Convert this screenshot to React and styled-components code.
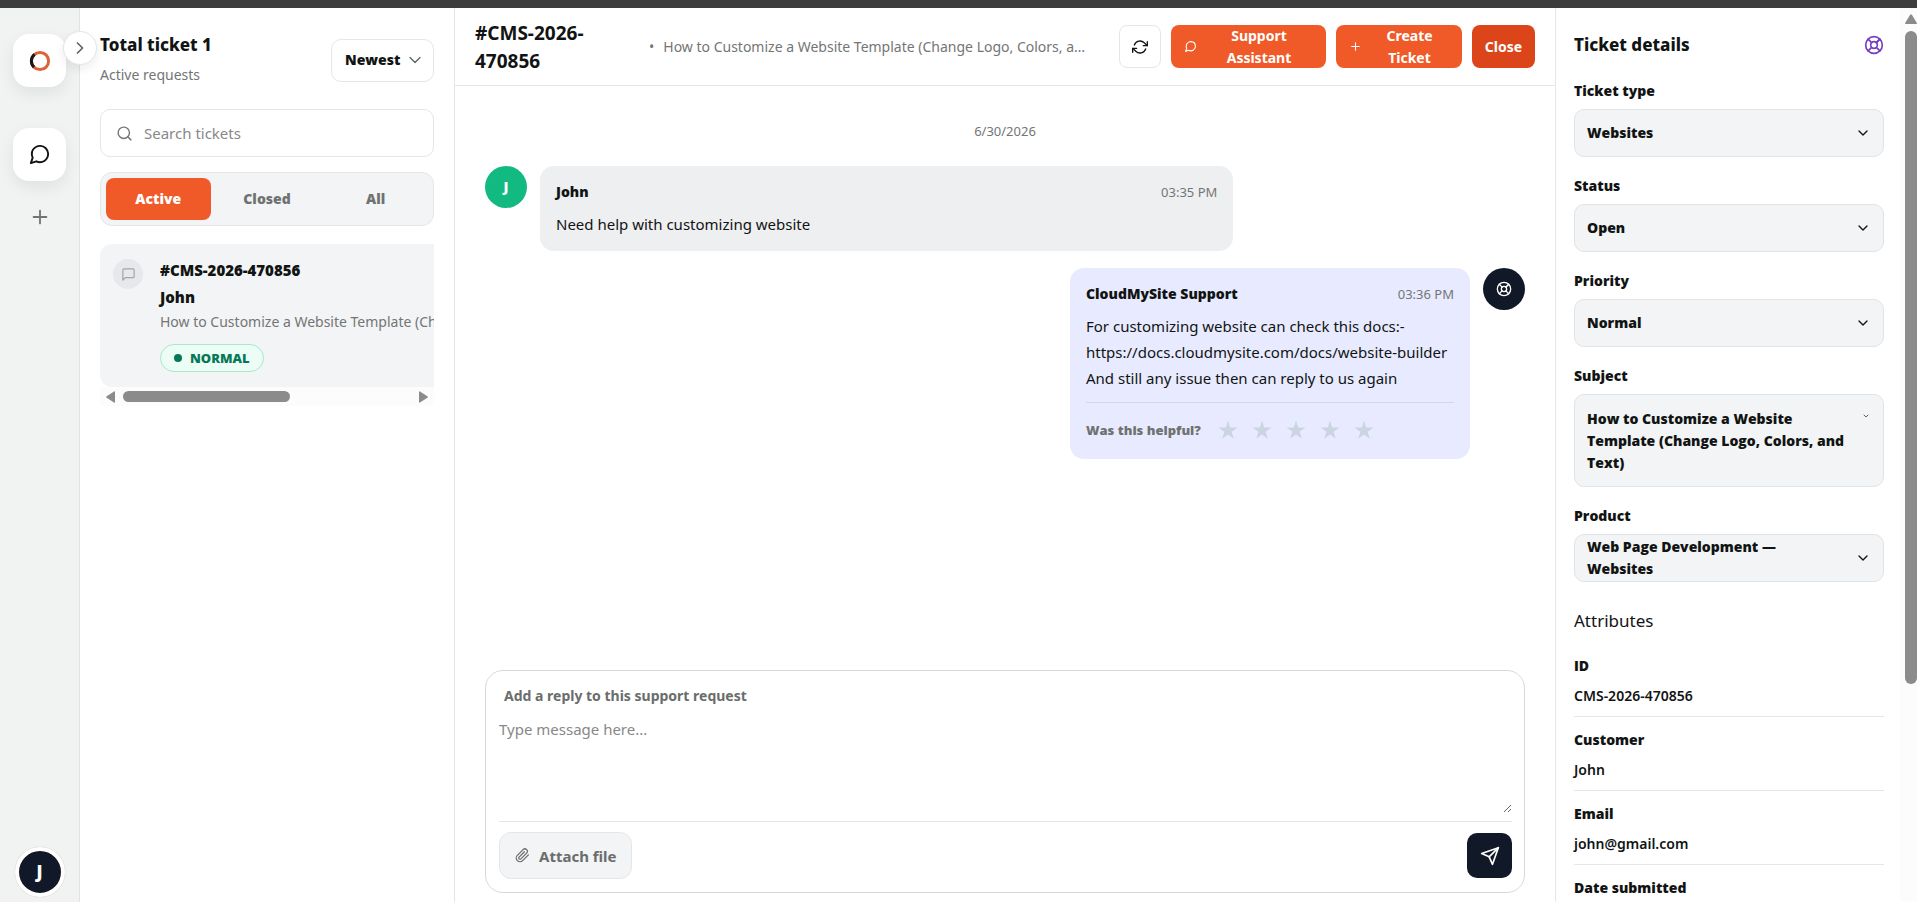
import React, { useState } from 'react';
import styled, { createGlobalStyle } from 'styled-components';
import {
    FiChevronDown,
    FiChevronRight,
    FiLifeBuoy,
    FiMessageCircle,
    FiMessageSquare,
    FiPaperclip,
    FiPlus,
    FiRefreshCw,
    FiSearch,
    FiSend,
} from 'react-icons/fi';

const heavyFont = '"Segoe UI", "Open Sans", sans-serif';

const GlobalStyle = createGlobalStyle`
    *, *::before, *::after {
        box-sizing: border-box;
    }

    body {
        margin: 0;
        background: #ffffff;
        color: #111413;
        font-family: "Segoe UI", "Noto Sans", sans-serif;
        font-size: 15px;
        line-height: 22px;
    }

    button, input, select, textarea {
        font: inherit;
        color: inherit;
    }

    button, select {
        cursor: pointer;
    }

    h1, h2, h3, p, dl, dt, dd {
        margin: 0;
    }
`;

const Page = styled.div`
    display: flex;
    flex-direction: column;
    height: 100vh;
    overflow: hidden;
    border-top: 8px solid #3d3d3d;
`;

const Workspace = styled.div`
    display: grid;
    grid-template-columns: 80px 375px minmax(0, 1fr) 361px;
    flex: 1;
    min-height: 0;
`;

/* Left rail */

const Rail = styled.nav`
    position: relative;
    display: flex;
    flex-direction: column;
    align-items: center;
    padding: 26px 0 5px;
    background: #f0f3f2;
    border-right: 1px solid #e0e3e2;
`;

const RailTile = styled.button`
    display: grid;
    place-items: center;
    width: 53px;
    height: 53px;
    padding: 0;
    border: none;
    border-radius: 16px;
    background: #ffffff;
    box-shadow: 0 6px 16px rgba(20, 30, 28, 0.08);
    margin-bottom: ${(props) => props.$gap || '0'};
`;

const RailPlain = styled.button`
    display: grid;
    place-items: center;
    width: 36px;
    height: 36px;
    padding: 0;
    border: none;
    background: none;
    color: #6f7473;
`;

const CollapseButton = styled.button`
    position: absolute;
    top: 23px;
    right: -18px;
    z-index: 2;
    display: grid;
    place-items: center;
    width: 34px;
    height: 34px;
    padding: 0;
    border: 1px solid #e3e6e5;
    border-radius: 50%;
    background: #ffffff;
    color: #5c6160;
    box-shadow: 0 4px 10px rgba(20, 30, 28, 0.08);
`;

const ProfileButton = styled.button`
    width: 50px;
    height: 50px;
    margin-top: auto;
    padding: 0;
    border: 4px solid #ffffff;
    border-radius: 50%;
    background: #111827;
    color: #ffffff;
    font-family: ${heavyFont};
    font-size: 17px;
    font-weight: 800;
    box-shadow: 0 0 1px rgba(20, 30, 28, 0.3);
`;

/* Ticket list */

const ListPanel = styled.section`
    display: flex;
    flex-direction: column;
    min-width: 0;
    padding: 26px 20px;
    border-right: 1px solid #e4e6e8;
`;

const ListHeader = styled.header`
    display: flex;
    justify-content: space-between;
    align-items: center;
    margin-bottom: 23px;
`;

const PanelTitle = styled.h2`
    font-size: 17px;
    line-height: 22px;
    font-weight: 800;
`;

const ListCaption = styled.p`
    margin-top: 8px;
    color: #737675;
    font-size: 14px;
`;

const SelectWrap = styled.div`
    position: relative;
    width: ${(props) => props.$width || '100%'};

    svg {
        position: absolute;
        top: 50%;
        right: ${(props) => props.$inset || '13px'};
        transform: translateY(-50%);
        pointer-events: none;
    }
`;

const SortSelect = styled.select`
    appearance: none;
    width: 100%;
    height: 43px;
    padding: 0 30px 0 13px;
    border: 1px solid #e4e6e8;
    border-radius: 10px;
    background: #ffffff;
    font-family: ${heavyFont};
    font-size: 14px;
    font-weight: 800;
`;

const SearchBox = styled.label`
    display: flex;
    align-items: center;
    gap: 11px;
    height: 48px;
    margin-bottom: 15px;
    padding: 0 15px;
    border: 1px solid #e4e6e8;
    border-radius: 10px;
    color: #737675;
`;

const SearchInput = styled.input`
    flex: 1;
    min-width: 0;
    padding: 0;
    border: none;
    outline: none;
    background: none;

    &::placeholder {
        color: #868988;
        opacity: 1;
    }
`;

const Tabs = styled.div`
    display: grid;
    grid-template-columns: repeat(3, 1fr);
    gap: 4px;
    height: 54px;
    margin-bottom: 18px;
    padding: 5px;
    border: 1px solid #e4e6e8;
    border-radius: 12px;
    background: #f2f4f5;
`;

const Tab = styled.button`
    padding: 0;
    border: none;
    border-radius: 8px;
    background: ${(props) => (props.$active ? '#f05a28' : 'transparent')};
    color: ${(props) => (props.$active ? '#ffffff' : '#6f7271')};
    font-family: ${heavyFont};
    font-size: 14px;
    font-weight: 800;
`;

const ListScroller = styled.div`
    overflow: hidden;
`;

const TicketCard = styled.article`
    display: flex;
    gap: 17px;
    width: 640px;
    height: 143px;
    padding: 15px 13px;
    border-radius: 12px;
    background: #f2f4f5;
`;

const TicketIcon = styled.span`
    display: grid;
    place-items: center;
    flex: none;
    width: 30px;
    height: 30px;
    border-radius: 50%;
    background: #e6e8eb;
    color: #a3a6a8;
`;

const TicketBody = styled.div`
    display: flex;
    flex-direction: column;
    align-items: flex-start;
    white-space: nowrap;
`;

const TicketName = styled.strong`
    margin-bottom: ${(props) => props.$gap || '3px'};
    font-family: ${heavyFont};
    font-size: 15px;
    font-weight: 800;
`;

const TicketSubject = styled.span`
    margin-bottom: 11px;
    color: #737675;
    font-size: 14px;
`;

const PriorityBadge = styled.span`
    display: flex;
    align-items: center;
    gap: 8px;
    height: 28px;
    padding: 0 13px;
    border: 1px solid #a9e8cb;
    border-radius: 14px;
    background: #ecfdf5;
    color: #067857;
    font-family: ${heavyFont};
    font-size: 13px;
    font-weight: 800;

    &::before {
        content: "";
        width: 8px;
        height: 8px;
        border-radius: 50%;
        background: #067857;
    }
`;

const HorizontalBar = styled.div`
    display: flex;
    align-items: center;
    gap: 8px;
    height: 19px;
    padding: 0 6px;
    background: #fcfcfc;
`;

const HorizontalThumb = styled.span`
    width: 167px;
    height: 11px;
    margin-right: auto;
    border-radius: 6px;
    background: #8b8b8b;
`;

const Arrow = styled.svg`
    display: block;
    flex: none;
    fill: #8b8b8b;
`;

/* Conversation */

const Conversation = styled.main`
    display: flex;
    flex-direction: column;
    min-width: 0;
    border-right: 1px solid #e4e6e8;
`;

const TopBar = styled.header`
    display: flex;
    align-items: center;
    height: 78px;
    padding: 0 20px;
    border-bottom: 1px solid #e4e6e8;
`;

const TopTitle = styled.h1`
    flex: none;
    width: 164px;
    padding-right: 40px;
    font-size: 19px;
    line-height: 28px;
    font-weight: 700;
`;

const TopSubject = styled.p`
    flex: 1;
    min-width: 0;
    margin-right: 28px;
    padding-left: 10px;
    overflow: hidden;
    color: #737675;
    font-size: 14px;
    white-space: nowrap;
    text-overflow: ellipsis;

    &::before {
        content: "•";
        margin-right: 9px;
    }
`;

const Actions = styled.div`
    display: flex;
    gap: 10px;
`;

const IconButton = styled.button`
    display: grid;
    place-items: center;
    width: 42px;
    height: 43px;
    padding: 0;
    border: 1px solid #e4e6e8;
    border-radius: 8px;
    background: #ffffff;
`;

const ActionButton = styled.button`
    display: flex;
    align-items: center;
    gap: 8px;
    width: ${(props) => props.$width};
    height: 43px;
    padding: ${(props) => (props.$strong ? '0' : '0 13px')};
    border: none;
    border-radius: 8px;
    background: ${(props) => (props.$strong ? '#dc4519' : '#f05a28')};
    color: #ffffff;
    font-size: 14px;
    font-weight: 700;

    span {
        flex: 1;
    }

    svg {
        flex: none;
    }
`;

const Thread = styled.div`
    flex: 1;
    min-height: 0;
    padding: 34px 30px 0;
    overflow: hidden;
`;

const DayLabel = styled.p`
    margin-bottom: 24px;
    color: #737675;
    font-size: 13px;
    text-align: center;
`;

const MessageRow = styled.div`
    display: flex;
    justify-content: ${(props) => (props.$own ? 'flex-end' : 'flex-start')};
    gap: 13px;
    margin-bottom: 17px;
`;

const Avatar = styled.span`
    display: grid;
    place-items: center;
    flex: none;
    width: 42px;
    height: 42px;
    border-radius: 50%;
    background: ${(props) => props.$color};
    color: #ffffff;
    font-family: ${heavyFont};
    font-size: 14px;
    font-weight: 800;
`;

const Bubble = styled.article`
    width: ${(props) => props.$width};
    padding: 15px 16px 14px;
    border-radius: 14px;
    background: ${(props) => props.$color};
`;

const BubbleHead = styled.header`
    display: flex;
    justify-content: space-between;
    margin-bottom: 8px;
`;

const Sender = styled.strong`
    font-family: ${heavyFont};
    font-size: 14px;
    font-weight: 800;
`;

const Time = styled.time`
    color: #737675;
    font-size: 13px;
`;

const MessageText = styled.p`
    font-size: 15px;
    line-height: 26px;
    white-space: pre-line;
`;

const Feedback = styled.div`
    display: flex;
    align-items: center;
    gap: 16px;
    height: 43px;
    margin-top: 11px;
    padding-top: 12px;
    border-top: 1px solid #cfd8ea;
    color: #6f7271;
    font-family: ${heavyFont};
    font-size: 13px;
    font-weight: 800;
`;

const Stars = styled.div`
    display: flex;
    gap: 12px;
`;

const Star = styled.button`
    display: block;
    width: 22px;
    height: 22px;
    padding: 0;
    border: none;
    background: none;

    svg {
        display: block;
        fill: #cbd5e1;
    }
`;

const Composer = styled.form`
    margin: 0 30px 9px;
    padding: 14px 12px 13px 13px;
    border: 1px solid #d6d9db;
    border-radius: 18px;
`;

const ComposerLabel = styled.label`
    display: block;
    padding: 0 5px;
    color: #6a6d6c;
    font-size: 14px;
    font-weight: 700;
`;

const ComposerInput = styled.textarea`
    display: block;
    width: 100%;
    height: 95px;
    margin: 11px 0 8px;
    padding: 0;
    border: none;
    outline: none;
    resize: vertical;

    &::placeholder {
        color: #868988;
        opacity: 1;
    }
`;

const ComposerFooter = styled.div`
    display: flex;
    justify-content: space-between;
    align-items: center;
    padding-top: 10px;
    border-top: 1px solid #e4e6e8;
`;

const AttachButton = styled.button`
    display: flex;
    align-items: center;
    gap: 9px;
    height: 47px;
    padding: 0 15px;
    border: 1px solid #e4e6e8;
    border-radius: 12px;
    background: #f2f4f5;
    color: #6a6d6c;
    font-size: 15px;
    font-weight: 700;
`;

const SendButton = styled.button`
    display: grid;
    place-items: center;
    width: 45px;
    height: 45px;
    padding: 0;
    border: none;
    border-radius: 10px;
    background: #111827;
    color: #ffffff;
`;

/* Ticket details */

const DetailsPanel = styled.aside`
    display: flex;
    min-width: 0;
    min-height: 0;
`;

const DetailsBody = styled.div`
    flex: 1;
    min-width: 0;
    padding: 26px 16px 0 18px;
    overflow: hidden;
`;

const DetailsHeader = styled.header`
    display: flex;
    justify-content: space-between;
    align-items: center;
    margin-bottom: 24px;

    svg {
        color: #7440c0;
    }
`;

const Field = styled.div`
    margin-bottom: 18px;
`;

const FieldLabel = styled.label`
    display: block;
    margin-bottom: 7px;
    font-family: ${heavyFont};
    font-size: 14px;
    font-weight: 800;
`;

const FieldSelect = styled.select`
    appearance: none;
    display: block;
    width: 100%;
    height: 48px;
    padding: 0 32px 0 12px;
    border: 1px solid #e1e4e6;
    border-radius: 10px;
    background: #f2f4f5;
    font-family: ${heavyFont};
    font-size: 14px;
    font-weight: 800;
    opacity: 1;
`;

const WrapField = styled.div`
    position: relative;
    display: flex;
    align-items: ${(props) => (props.$tall ? 'flex-start' : 'center')};
    justify-content: space-between;
    height: ${(props) => (props.$tall ? '93px' : '48px')};
    padding: ${(props) => (props.$tall ? '13px 13px 13px 12px' : '0 12px')};
    border: 1px solid #e1e4e6;
    border-radius: 10px;
    background: #f2f4f5;
    font-family: ${heavyFont};
    font-size: 14px;
    font-weight: 800;

    span {
        padding-right: ${(props) => (props.$tall ? '8px' : '24px')};
    }

    svg {
        flex: none;
        margin-top: ${(props) => (props.$tall ? '4px' : '0')};
    }
`;

const OverlaySelect = styled.select`
    position: absolute;
    inset: 0;
    width: 100%;
    height: 100%;
    opacity: 0;
`;

const SectionTitle = styled.h3`
    margin: 28px 0 23px;
    font-size: 17px;
    line-height: 22px;
    font-weight: 400;
`;

const Attributes = styled.dl`
    display: flex;
    flex-direction: column;
    gap: 12px;
`;

const Attribute = styled.div`
    height: 62px;
    border-bottom: 1px solid #e4e6e8;

    dt {
        margin-bottom: 8px;
        font-family: ${heavyFont};
        font-size: 14px;
        font-weight: 800;
    }

    dd {
        font-size: 14px;
        font-weight: 600;
    }
`;

const VerticalBar = styled.div`
    display: flex;
    flex-direction: column;
    align-items: flex-end;
    gap: 7px;
    width: 17px;
    padding: 6px 0;
    background: #fcfcfc;
`;

const VerticalThumb = styled.span`
    width: 12px;
    height: 74%;
    border-radius: 6px;
    background: #8b8b8b;
`;

const attributes = [
    { label: 'ID', value: 'CMS-2026-470856' },
    { label: 'Customer', value: 'John' },
    { label: 'Email', value: 'john@gmail.com' },
    { label: 'Date submitted', value: '6/30/2026' },
];

const subject = 'How to Customize a Website Template (Change Logo, Colors, and Text)';

const Logo = () => (
    <svg width="22" height="22" viewBox="0 0 22 22" fill="none" strokeWidth="3">
        <circle cx="11" cy="11" r="8.6" stroke="#dc6238" />
        <path d="M5 17.2A8.6 8.6 0 0 1 5.6 4.3" stroke="#16181d" />
    </svg>
);

const DropField = ({ id, label, options }) => (
    <Field>
        <FieldLabel htmlFor={id}>{label}</FieldLabel>
        <SelectWrap>
            <FieldSelect id={id}>
                {options.map((option) => <option key={option}>{option}</option>)}
            </FieldSelect>
            <FiChevronDown size={16} />
        </SelectWrap>
    </Field>
);

const WrapDropField = ({ id, label, value, tall }) => (
    <Field>
        <FieldLabel htmlFor={id}>{label}</FieldLabel>
        <WrapField $tall={tall}>
            <span>{value}</span>
            <FiChevronDown size={tall ? 8 : 16} />
            <OverlaySelect id={id}>
                <option>{value}</option>
            </OverlaySelect>
        </WrapField>
    </Field>
);

const TicketList = () => {
    const [tab, setTab] = useState('Active');

    return (
        <ListPanel>
            <ListHeader>
                <div>
                    <PanelTitle>Total ticket 1</PanelTitle>
                    <ListCaption>Active requests</ListCaption>
                </div>
                <SelectWrap $width="103px" $inset="9px">
                    <SortSelect aria-label="Sort tickets">
                        <option>Newest</option>
                        <option>Oldest</option>
                    </SortSelect>
                    <FiChevronDown size={20} strokeWidth={1.5} color="#5c6160" />
                </SelectWrap>
            </ListHeader>
            <SearchBox>
                <FiSearch size={17} />
                <SearchInput type="text" placeholder="Search tickets" aria-label="Search tickets" />
            </SearchBox>
            <Tabs>
                {['Active', 'Closed', 'All'].map((name) => (
                    <Tab key={name} type="button" $active={tab === name} onClick={() => setTab(name)}>
                        {name}
                    </Tab>
                ))}
            </Tabs>
            <ListScroller>
                <TicketCard>
                    <TicketIcon><FiMessageSquare size={15} /></TicketIcon>
                    <TicketBody>
                        <TicketName $gap="5px">#CMS-2026-470856</TicketName>
                        <TicketName>John</TicketName>
                        <TicketSubject>{subject}</TicketSubject>
                        <PriorityBadge>NORMAL</PriorityBadge>
                    </TicketBody>
                </TicketCard>
            </ListScroller>
            <HorizontalBar>
                <Arrow width="9" height="12" viewBox="0 0 9 12"><path d="M9 1v10q0 1-1 .6L.6 6.8q-.8-.8 0-1.6L8 .4q1-.4 1 .6z" /></Arrow>
                <HorizontalThumb />
                <Arrow width="9" height="12" viewBox="0 0 9 12"><path d="M0 1v10q0 1 1 .6l7.4-4.8q.8-.8 0-1.6L1 .4Q0 0 0 1z" /></Arrow>
            </HorizontalBar>
        </ListPanel>
    );
};

const Messages = () => (
    <Thread>
        <DayLabel>6/30/2026</DayLabel>
        <MessageRow>
            <Avatar $color="#12b981">J</Avatar>
            <Bubble $color="#eeeff1" $width="calc(100% * 2 / 3)">
                <BubbleHead>
                    <Sender>John</Sender>
                    <Time>03:35 PM</Time>
                </BubbleHead>
                <MessageText>Need help with customizing website</MessageText>
            </Bubble>
        </MessageRow>
        <MessageRow $own>
            <Bubble $color="#e8ebff" $width="400px">
                <BubbleHead>
                    <Sender>CloudMySite Support</Sender>
                    <Time>03:36 PM</Time>
                </BubbleHead>
                <MessageText>
                    {'For customizing website can check this docs:-\nhttps://docs.cloudmysite.com/docs/website-builder\nAnd still any issue then can reply to us again'}
                </MessageText>
                <Feedback>
                    <span>Was this helpful?</span>
                    <Stars>
                        {[1, 2, 3, 4, 5].map((n) => (
                            <Star key={n} type="button" aria-label={`Rate ${n}`}>
                                <svg width="22" height="22" viewBox="0 0 22 22">
                                    <path d="M11 1.6l2.2 6.9h7.3l-5.9 4.3 2.2 6.9-5.8-4.2-5.8 4.2 2.2-6.9-5.9-4.3h7.3z" />
                                </svg>
                            </Star>
                        ))}
                    </Stars>
                </Feedback>
            </Bubble>
            <Avatar $color="#111827"><FiLifeBuoy size={16} /></Avatar>
        </MessageRow>
    </Thread>
);

const ReplyBox = () => (
    <Composer onSubmit={(event) => event.preventDefault()}>
        <ComposerLabel htmlFor="reply">Add a reply to this support request</ComposerLabel>
        <ComposerInput id="reply" placeholder="Type message here..." />
        <ComposerFooter>
            <AttachButton type="button"><FiPaperclip size={15} />Attach file</AttachButton>
            <SendButton type="submit" aria-label="Send"><FiSend size={20} /></SendButton>
        </ComposerFooter>
    </Composer>
);

const TicketDetails = () => (
    <DetailsPanel>
        <DetailsBody>
            <DetailsHeader>
                <PanelTitle>Ticket details</PanelTitle>
                <FiLifeBuoy size={20} />
            </DetailsHeader>
            <DropField id="type" label="Ticket type" options={['Websites', 'Hosting']} />
            <DropField id="status" label="Status" options={['Open', 'Closed']} />
            <DropField id="priority" label="Priority" options={['Normal', 'High']} />
            <WrapDropField id="subject" label="Subject" value={subject} tall />
            <WrapDropField id="product" label="Product" value="Web Page Development — Websites" />
            <SectionTitle>Attributes</SectionTitle>
            <Attributes>
                {attributes.map((item) => (
                    <Attribute key={item.label}>
                        <dt>{item.label}</dt>
                        <dd>{item.value}</dd>
                    </Attribute>
                ))}
            </Attributes>
        </DetailsBody>
        <VerticalBar>
            <Arrow width="12" height="10" viewBox="0 0 12 10"><path d="M1 10h10q1.400 0 .7-1.200L6.900.7Q6-.4 5.100.7L.3 8.800Q-.4 10 1 10z" /></Arrow>
            <VerticalThumb />
        </VerticalBar>
    </DetailsPanel>
);

const App = () => {
    return (
        <Page>
            <GlobalStyle />
            <Workspace>
                <Rail>
                    <RailTile type="button" aria-label="Home" $gap="41px"><Logo /></RailTile>
                    <RailTile type="button" aria-label="Tickets" $gap="18px"><FiMessageCircle size={23} /></RailTile>
                    <RailPlain type="button" aria-label="New ticket"><FiPlus size={22} /></RailPlain>
                    <CollapseButton type="button" aria-label="Expand"><FiChevronRight size={20} /></CollapseButton>
                    <ProfileButton type="button">J</ProfileButton>
                </Rail>
                <TicketList />
                <Conversation>
                    <TopBar>
                        <TopTitle>#CMS-2026-470856</TopTitle>
                        <TopSubject>{subject}</TopSubject>
                        <Actions>
                            <IconButton type="button" aria-label="Refresh"><FiRefreshCw size={16} /></IconButton>
                            <ActionButton type="button" $width="155px"><FiMessageCircle size={13} /><span>Support Assistant</span></ActionButton>
                            <ActionButton type="button" $width="126px"><FiPlus size={13} /><span>Create Ticket</span></ActionButton>
                            <ActionButton type="button" $width="63px" $strong><span>Close</span></ActionButton>
                        </Actions>
                    </TopBar>
                    <Messages />
                    <ReplyBox />
                </Conversation>
                <TicketDetails />
            </Workspace>
        </Page>
    );
};

export default App;
